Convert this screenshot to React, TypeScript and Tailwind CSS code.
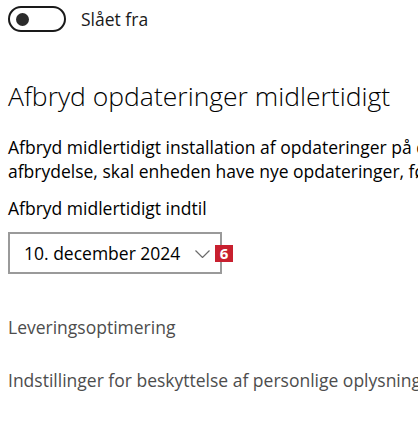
export default function App() {
  return (
    <div
      className="w-[418px] h-[425px] overflow-hidden bg-white pl-[8px] pt-[6px] text-black"
      style={{ fontFamily: '"Open Sans", "Noto Sans", sans-serif' }}
    >
      {/* toggle */}
      <div className="flex items-center gap-[15px]">
        <div className="w-[58px] h-[26px] rounded-full border-2 border-[#1a1a1a] flex items-center pl-[6px]">
          <div className="w-[13px] h-[13px] rounded-full bg-[#2b2b2b]" />
        </div>
        <span className="text-[17.5px] leading-[26px] text-[#1a1a1a]">Slået fra</span>
      </div>

      <h2 className="mt-[46px] text-[26.5px] leading-[36px] font-light whitespace-nowrap">
        Afbryd opdateringer midlertidigt
      </h2>

      <div className="mt-[21px] text-[17.5px] leading-[24px] whitespace-nowrap">
        <p>Afbryd midlertidigt installation af opdateringer på denne enhed i op til 35 dage. Når du når slutningen af</p>
        <p>afbrydelse, skal enheden have nye opdateringer, før du kan afbryde igen.</p>
      </div>

      <p className="mt-[13px] text-[17.5px] leading-[24px] whitespace-nowrap">Afbryd midlertidigt indtil</p>

      <div className="mt-[12px] relative w-[214px] h-[42px] border-2 border-[#9a9a9a] flex items-center justify-between pl-[14px] pr-[10px]">
        <span className="text-[17.5px] leading-[24px]">10. december 2024</span>
        <svg width="15" height="8" viewBox="0 0 15 8" className="mt-[1px]">
          <polyline points="0.5,0.5 7.5,7.5 14.5,0.5" fill="none" stroke="#6b6b6b" strokeWidth="1.2" />
        </svg>
        <span className="absolute -right-[13px] top-[11px] w-[18px] h-[17px] bg-[#c8202f] text-white text-[15px] leading-[17px] font-bold flex items-center justify-center">
          6
        </span>
      </div>

      <p className="mt-[41px] text-[17.5px] leading-[24px] text-[#4d4d4d] whitespace-nowrap">Leveringsoptimering</p>

      <p className="mt-[29px] text-[17.5px] leading-[24px] text-[#4d4d4d] whitespace-nowrap">
        Indstillinger for beskyttelse af personlige oplysninger
      </p>
    </div>
  );
}
